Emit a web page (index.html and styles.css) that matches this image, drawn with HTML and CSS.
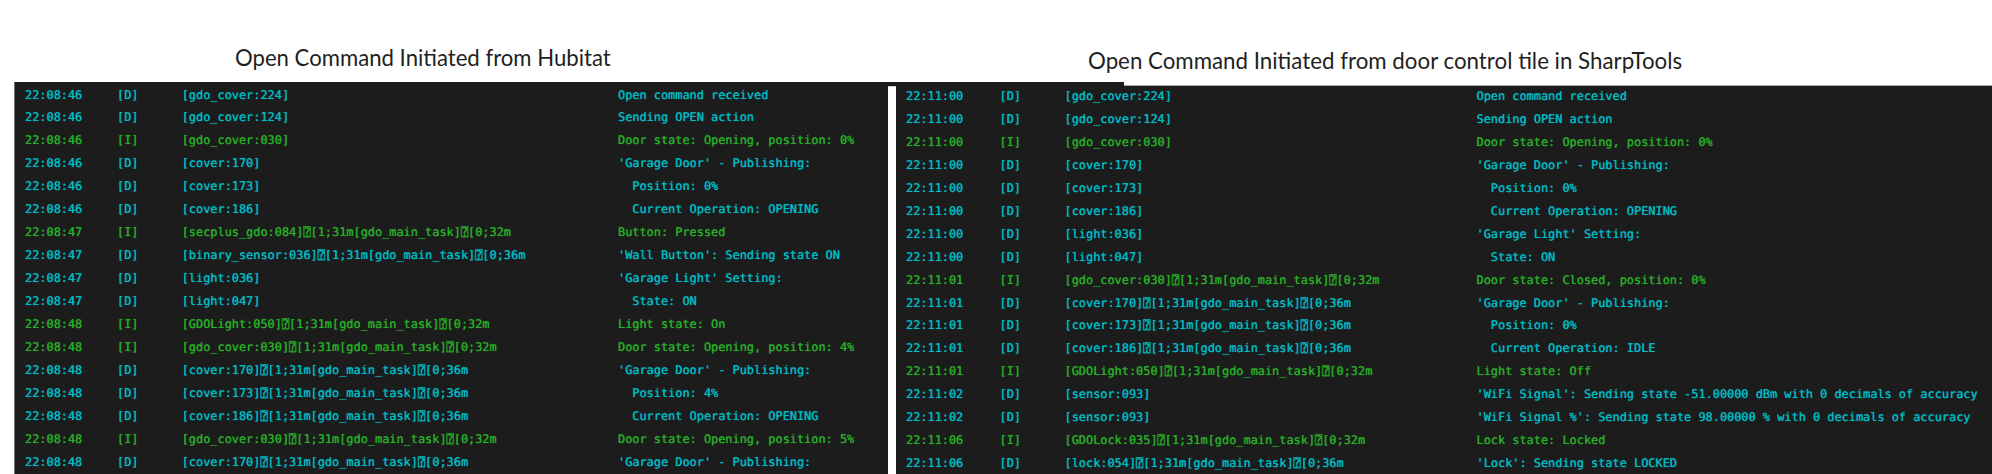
FILE: index.html
```html
<!DOCTYPE html>
<html lang="en">
<head>
<meta charset="utf-8">
<title>Open Command logs</title>
<link rel="stylesheet" href="styles.css">
</head>
<body>
<header class="titles">
  <h2 class="title title-left">Open Command Initiated from Hubitat</h2>
  <h2 class="title title-right">Open Command Initiated from door control tile in SharpTools</h2>
</header>
<main class="screens">
  <div class="notch"></div>
  <section class="log log-left">
    <div class="row d"><span>22:08:46</span><span>[D]</span><span>[gdo_cover:224]</span><span>Open command received</span></div>
    <div class="row d"><span>22:08:46</span><span>[D]</span><span>[gdo_cover:124]</span><span>Sending OPEN action</span></div>
    <div class="row i"><span>22:08:46</span><span>[I]</span><span>[gdo_cover:030]</span><span>Door state: Opening, position: 0%</span></div>
    <div class="row d"><span>22:08:46</span><span>[D]</span><span>[cover:170]</span><span>'Garage Door' - Publishing:</span></div>
    <div class="row d"><span>22:08:46</span><span>[D]</span><span>[cover:173]</span><span>  Position: 0%</span></div>
    <div class="row d"><span>22:08:46</span><span>[D]</span><span>[cover:186]</span><span>  Current Operation: OPENING</span></div>
    <div class="row i"><span>22:08:47</span><span>[I]</span><span>[secplus_gdo:084]⍰[1;31m[gdo_main_task]⍰[0;32m</span><span>Button: Pressed</span></div>
    <div class="row d"><span>22:08:47</span><span>[D]</span><span>[binary_sensor:036]⍰[1;31m[gdo_main_task]⍰[0;36m</span><span>'Wall Button': Sending state ON</span></div>
    <div class="row d"><span>22:08:47</span><span>[D]</span><span>[light:036]</span><span>'Garage Light' Setting:</span></div>
    <div class="row d"><span>22:08:47</span><span>[D]</span><span>[light:047]</span><span>  State: ON</span></div>
    <div class="row i"><span>22:08:48</span><span>[I]</span><span>[GDOLight:050]⍰[1;31m[gdo_main_task]⍰[0;32m</span><span>Light state: On</span></div>
    <div class="row i"><span>22:08:48</span><span>[I]</span><span>[gdo_cover:030]⍰[1;31m[gdo_main_task]⍰[0;32m</span><span>Door state: Opening, position: 4%</span></div>
    <div class="row d"><span>22:08:48</span><span>[D]</span><span>[cover:170]⍰[1;31m[gdo_main_task]⍰[0;36m</span><span>'Garage Door' - Publishing:</span></div>
    <div class="row d"><span>22:08:48</span><span>[D]</span><span>[cover:173]⍰[1;31m[gdo_main_task]⍰[0;36m</span><span>  Position: 4%</span></div>
    <div class="row d"><span>22:08:48</span><span>[D]</span><span>[cover:186]⍰[1;31m[gdo_main_task]⍰[0;36m</span><span>  Current Operation: OPENING</span></div>
    <div class="row i"><span>22:08:48</span><span>[I]</span><span>[gdo_cover:030]⍰[1;31m[gdo_main_task]⍰[0;32m</span><span>Door state: Opening, position: 5%</span></div>
    <div class="row d"><span>22:08:48</span><span>[D]</span><span>[cover:170]⍰[1;31m[gdo_main_task]⍰[0;36m</span><span>'Garage Door' - Publishing:</span></div>
  </section>
  <div class="divider"></div>
  <section class="log log-right">
    <div class="row d"><span>22:11:00</span><span>[D]</span><span>[gdo_cover:224]</span><span>Open command received</span></div>
    <div class="row d"><span>22:11:00</span><span>[D]</span><span>[gdo_cover:124]</span><span>Sending OPEN action</span></div>
    <div class="row i"><span>22:11:00</span><span>[I]</span><span>[gdo_cover:030]</span><span>Door state: Opening, position: 0%</span></div>
    <div class="row d"><span>22:11:00</span><span>[D]</span><span>[cover:170]</span><span>'Garage Door' - Publishing:</span></div>
    <div class="row d"><span>22:11:00</span><span>[D]</span><span>[cover:173]</span><span>  Position: 0%</span></div>
    <div class="row d"><span>22:11:00</span><span>[D]</span><span>[cover:186]</span><span>  Current Operation: OPENING</span></div>
    <div class="row d"><span>22:11:00</span><span>[D]</span><span>[light:036]</span><span>'Garage Light' Setting:</span></div>
    <div class="row d"><span>22:11:00</span><span>[D]</span><span>[light:047]</span><span>  State: ON</span></div>
    <div class="row i"><span>22:11:01</span><span>[I]</span><span>[gdo_cover:030]⍰[1;31m[gdo_main_task]⍰[0;32m</span><span>Door state: Closed, position: 0%</span></div>
    <div class="row d"><span>22:11:01</span><span>[D]</span><span>[cover:170]⍰[1;31m[gdo_main_task]⍰[0;36m</span><span>'Garage Door' - Publishing:</span></div>
    <div class="row d"><span>22:11:01</span><span>[D]</span><span>[cover:173]⍰[1;31m[gdo_main_task]⍰[0;36m</span><span>  Position: 0%</span></div>
    <div class="row d"><span>22:11:01</span><span>[D]</span><span>[cover:186]⍰[1;31m[gdo_main_task]⍰[0;36m</span><span>  Current Operation: IDLE</span></div>
    <div class="row i"><span>22:11:01</span><span>[I]</span><span>[GDOLight:050]⍰[1;31m[gdo_main_task]⍰[0;32m</span><span>Light state: Off</span></div>
    <div class="row d"><span>22:11:02</span><span>[D]</span><span>[sensor:093]</span><span>'WiFi Signal': Sending state -51.00000 dBm with 0 decimals of accuracy</span></div>
    <div class="row d"><span>22:11:02</span><span>[D]</span><span>[sensor:093]</span><span>'WiFi Signal %': Sending state 98.00000 % with 0 decimals of accuracy</span></div>
    <div class="row i"><span>22:11:06</span><span>[I]</span><span>[GDOLock:035]⍰[1;31m[gdo_main_task]⍰[0;32m</span><span>Lock state: Locked</span></div>
    <div class="row d"><span>22:11:06</span><span>[D]</span><span>[lock:054]⍰[1;31m[gdo_main_task]⍰[0;36m</span><span>'Lock': Sending state LOCKED</span></div>
  </section>
</main>
</body>
</html>
```
FILE: styles.css
```css
html, body {
  margin: 0;
  height: 474px;
  overflow: hidden;
  background: #fff;
}

.titles {
  display: flex;
  align-items: flex-start;
  height: 82px;
  padding-left: 235px;
  font-family: "Lato", sans-serif;
}

.title {
  margin: 0;
  font-weight: 400;
  line-height: 28px;
  color: #1f1f1f;
  white-space: nowrap;
}

.title-left {
  width: 853px;
  margin-top: 44px;
  font-size: 22.15px;
}

.title-right {
  margin-top: 47px;
  font-size: 22.3px;
}

.screens {
  position: relative;
  display: flex;
  height: 392px;
  margin-left: 14px;
  border-left: 1px solid #6e6e6e;
  background: #1c1c1c;
  overflow: hidden;
  text-rendering: geometricPrecision;
}

.notch {
  position: absolute;
  top: 0;
  left: 1109px;
  right: 0;
  height: 3px;
  background: #fff;
  border-bottom: 1px solid #a8a8a8;
}

.divider {
  flex: none;
  width: 8px;
  margin-top: 4px;
  background: #fff;
  border-top: 1px solid #d0d0d0;
  box-sizing: border-box;
}

.log {
  flex: none;
  box-sizing: border-box;
  font-family: "DejaVu Sans Mono", monospace;
  font-size: 11.9px;
  text-shadow: 0 0 0.7px currentColor;
}

.log-left {
  width: 873px;
  padding: 1.5px 0 0 10px;
}

.log-right {
  width: 1096px;
  padding: 2.8px 0 0 10px;
}

.row {
  display: grid;
  height: 22.97px;
  line-height: 22.97px;
  white-space: pre;
}

.log-left .row {
  grid-template-columns: 92px 64.7px 436.3px 1fr;
}

.log-right .row {
  grid-template-columns: 93.5px 65px 412px 1fr;
}

.d {
  color: #00bcc4;
}

.i {
  color: #28ae28;
}
```
